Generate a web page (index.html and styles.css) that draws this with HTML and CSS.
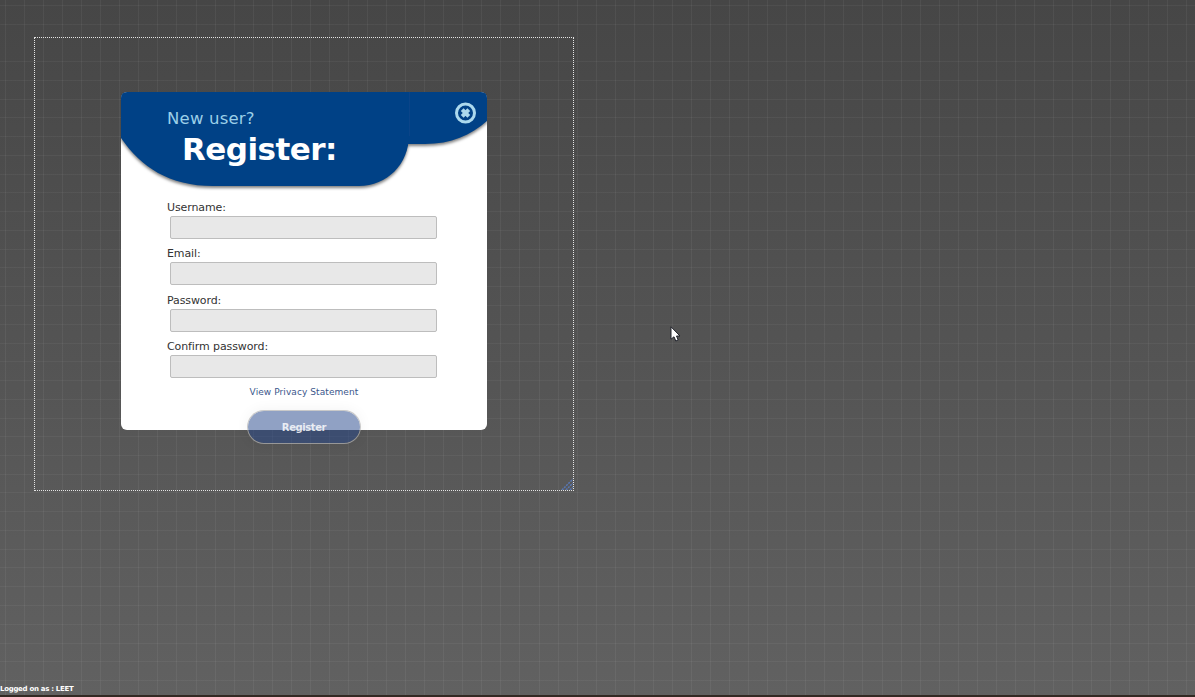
FILE: index.html
```html
<!DOCTYPE html>
<html lang="en">
<head>
<meta charset="utf-8">
<title>Register</title>
<link rel="stylesheet" href="styles.css">
</head>
<body>
<main class="desktop">
  <section class="frame">
    <form class="card">
      <header class="banner">
        <svg class="banner-shape" width="366" height="104" viewBox="0 0 366 104">
          <g class="banner-fill">
            <path d="M280 0H360Q366 0 366 6V29C350 43 330 52 304 52H280Z"/>
            <path d="M0 6Q0 0 6 0H288V43C288 72 266 94 238 94H92C48 94 20 75 0 46Z"/>
          </g>
          <path class="banner-seam" d="M288.5 0V44"/>
        </svg>
        <div class="headings">
          <p class="kicker">New user?</p>
          <h1 class="title">Register:</h1>
        </div>
        <svg class="close" width="22" height="22" viewBox="0 0 22 22">
          <circle cx="10.5" cy="11" r="9" fill="none" stroke="#acd9ed" stroke-width="3"/>
          <path d="M7.2 7.7L13.8 14.3M13.8 7.7L7.2 14.3" stroke="#acd9ed" stroke-width="4"/>
        </svg>
      </header>
      <div class="fields">
        <label class="field"><span>Username:</span><input type="text"></label>
        <label class="field"><span>Email:</span><input type="text"></label>
        <label class="field"><span>Password:</span><input type="password"></label>
        <label class="field"><span>Confirm password:</span><input type="password"></label>
      </div>
      <a class="privacy">View Privacy Statement</a>
      <button class="submit" type="button">Register</button>
    </form>
    <svg class="grip" width="12" height="12" viewBox="0 0 12 12">
      <path d="M1 12L12 1M5 12L12 5M9 12L12 9" fill="none" stroke="#5877b4" stroke-width="1.5" stroke-dasharray="2 1"/>
    </svg>
  </section>
  <footer class="status">Logged on as : LEET</footer>
  <svg class="pointer" width="11" height="17" viewBox="0 0 11 17">
    <path d="M1 .8V13.2L4 10.8L5.8 15L8.2 14L6.5 10H10Z" fill="#fff" stroke="#20222b"/>
  </svg>
</main>
</body>
</html>
```
FILE: styles.css
```css
* { box-sizing: border-box; }
body { margin: 0; font-family: "DejaVu Sans", Verdana, sans-serif; }
.desktop {
  position: relative;
  width: 1195px;
  height: 697px;
  overflow: hidden;
  border-bottom: 2px solid #332923;
  background:
    repeating-linear-gradient(90deg, transparent 0 5px, rgba(255,255,255,.05) 5px 6px, transparent 6px 19.055px),
    repeating-linear-gradient(180deg, transparent 0 5px, rgba(255,255,255,.045) 5px 6px, transparent 6px 18.75px),
    linear-gradient(#464646, #616161);
}
.frame {
  position: absolute;
  left: 34px;
  top: 37px;
  width: 540px;
  height: 454px;
  padding: 54px 86px;
  border: 1px dotted #e4e4e4;
}
.card {
  display: flex;
  flex-direction: column;
  align-items: center;
  width: 366px;
  height: 338px;
  background: #fff;
  border-radius: 6px;
}
.banner {
  position: relative;
  flex: none;
  display: flex;
  justify-content: space-between;
  width: 366px;
  height: 109px;
  padding: 10px 10px 0 46px;
}
.banner-shape { position: absolute; left: 0; top: 0; }
.banner-fill { fill: #004186; filter: drop-shadow(0 2px 1.5px rgba(0,0,0,.5)); }
.banner-seam { stroke: #0b4488; stroke-width: 1; }
.headings, .close { position: relative; }
.close { flex: none; }
.kicker { margin: 6px 0 0; font-size: 16.5px; line-height: 21px; letter-spacing: .2px; color: #9bcfe8; }
.title { margin: 1px 0 0 15px; font-size: 31px; line-height: 38px; letter-spacing: -.55px; color: #fff; }
.fields { display: flex; flex-direction: column; width: 274px; }
.field { display: block; height: 46.4px; font-size: 11px; line-height: 14px; letter-spacing: -.1px; color: #333; white-space: nowrap; }
.field span { display: block; height: 15px; }
.field input {
  display: block;
  width: 267px;
  height: 23px;
  margin-left: 3px;
  padding: 0 4px;
  border: 1px solid #bdbdbd;
  border-radius: 2px;
  background: #e8e8e8;
}
.privacy { margin-top: -.6px; font-size: 9px; line-height: 12px; letter-spacing: .08px; color: #3c578c; white-space: nowrap; }
.submit {
  flex: none;
  width: 114px;
  height: 34px;
  margin-top: 12px;
  padding: 1px 0 0;
  border: 1px solid rgba(178,178,178,.7);
  border-radius: 17px;
  background: rgba(33,67,137,.5);
  background-clip: padding-box;
  box-shadow: 0 0 14px rgba(0,0,0,.05);
  font: bold 10px/32px "DejaVu Sans", Verdana, sans-serif;
  letter-spacing: -.4px;
  color: rgba(255,255,255,.82);
}
.grip { position: absolute; right: 0; bottom: 0; }
.status {
  position: absolute;
  left: 0;
  bottom: 1px;
  font: bold 7px/10px "DejaVu Sans", Tahoma, sans-serif;
  letter-spacing: -.3px;
  color: #fff;
  white-space: nowrap;
}
.pointer { position: absolute; left: 670px; top: 326px; }
```
